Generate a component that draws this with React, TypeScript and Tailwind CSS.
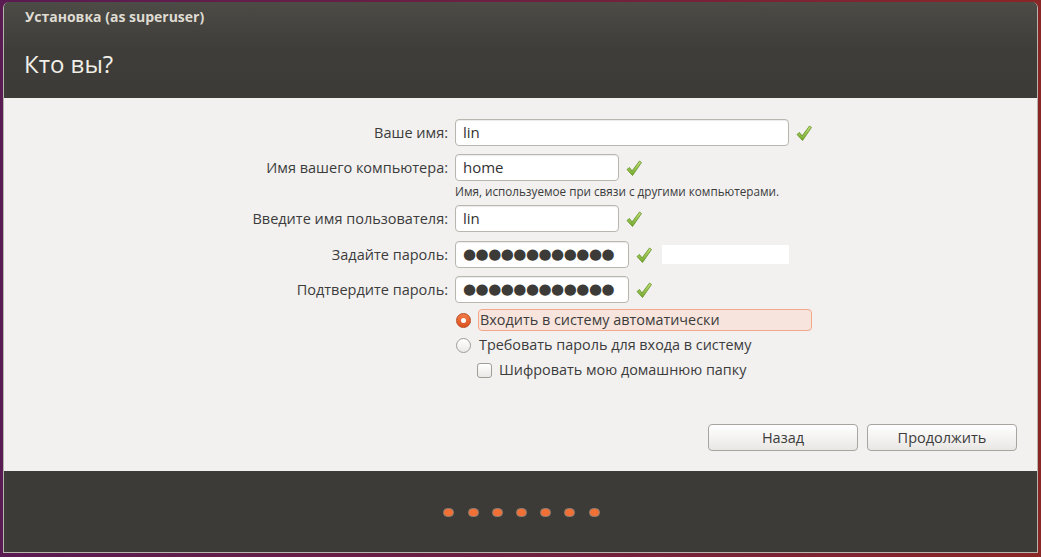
const font = "font-['Open_Sans','DejaVu_Sans',sans-serif]";

function Check() {
  return (
    <svg viewBox="0 0 18 18" className="h-[18px] w-[18px]" aria-hidden>
      <defs>
        <linearGradient id="ck" x1="0" y1="0" x2="0" y2="1">
          <stop offset="0" stopColor="#c4e07a" />
          <stop offset="1" stopColor="#73a82a" />
        </linearGradient>
      </defs>
      <path
        d="M2 10.5 L4.5 8.5 L7 12 L14.5 2 L16.5 3.5 L7.5 16.5 Z"
        fill="url(#ck)"
        stroke="#5d8f1f"
        strokeWidth="0.8"
        strokeLinejoin="round"
      />
    </svg>
  );
}

function Row({
  label,
  value,
  width,
  dots,
  extra,
}: {
  label: string;
  value: string;
  width: string;
  dots?: boolean;
  extra?: React.ReactNode;
}) {
  return (
    <div className="flex h-[27px] items-center">
      <div className="w-[445px] pr-[1px] text-right text-[14.5px] text-[#3c3c3c]">{label}</div>
      <div
        className={`ml-[6px] flex h-[27px] items-center rounded-[4px] border border-[#b9b6b0] bg-white px-[7px] shadow-[inset_0_1px_1px_rgba(0,0,0,0.08)] ${width}`}
      >
        {dots ? (
          <span className="text-[15px] leading-none tracking-[-0.5px] text-[#3c3b37] font-['DejaVu_Sans',sans-serif]">
            ●●●●●●●●●●●●
          </span>
        ) : (
          <span className="text-[15px] text-[#333]">{value}</span>
        )}
      </div>
      <div className="ml-[6px]">
        <Check />
      </div>
      {extra}
    </div>
  );
}

export default function App() {
  return (
    <div
      className={`h-[557px] w-[1041px] overflow-hidden bg-gradient-to-r from-[#5a1a52] via-[#6e2040] to-[#8a2626] pl-[3px] pt-[2px] ${font}`}
    >
      <div className="flex h-[551px] w-[1035px] flex-col overflow-hidden rounded-t-[6px] border-b border-x border-[#b7b4ae] bg-[#3c3b37]">
        {/* header */}
        <div className="h-[96px] bg-gradient-to-b from-[#4c4b46] via-[#3e3d39] to-[#3c3b37]">
          <div className="pl-[21px] pt-[4px] text-[14px] font-bold text-[#dfdbd2]">
            Установка (as superuser)
          </div>
          <div className="pl-[20px] pt-[25px] text-[24px] leading-none text-[#f2efe9]">Кто вы?</div>
        </div>

        {/* content */}
        <div className="flex h-[373px] flex-col bg-[#f2f1f0]">
          <div className="mt-[21px] flex flex-col">
            <Row label="Ваше имя:" value="lin" width="w-[334px]" />
            <div className="mt-[8px]">
              <Row label="Имя вашего компьютера:" value="home" width="w-[164px]" />
            </div>
            <div className="ml-[451px] mt-[3px] text-[11.7px] leading-[15px] text-[#3c3c3c]">
              Имя, используемое при связи с другими компьютерами.
            </div>
            <div className="mt-[6px]">
              <Row label="Введите имя пользователя:" value="lin" width="w-[164px]" />
            </div>
            <div className="mt-[9px]">
              <Row
                label="Задайте пароль:"
                value=""
                dots
                width="w-[174px]"
                extra={<div className="ml-[9px] h-[19px] w-[127px] bg-white" />}
              />
            </div>
            <div className="mt-[8px]">
              <Row label="Подтвердите пароль:" value="" dots width="w-[174px]" />
            </div>

            <div className="ml-[452px] mt-[6px] flex h-[22px] items-center">
              <span className="flex h-[15px] w-[15px] items-center justify-center rounded-full border border-[#b84a1c] bg-gradient-to-b from-[#f27a46] to-[#dd5220]">
                <span className="h-[5px] w-[5px] rounded-full bg-white" />
              </span>
              <div className="ml-[7px] flex h-[22px] w-[334px] items-center rounded-[4px] border border-[#f3a788] bg-[#f7e4dd] px-[1px] text-[14.4px] text-[#3c3c3c]">
                Входить в систему автоматически
              </div>
            </div>
            <div className="ml-[452px] mt-[3px] flex h-[22px] items-center">
              <span className="h-[15px] w-[15px] rounded-full border border-[#a09c96] bg-gradient-to-b from-white to-[#ebe9e6]" />
              <span className="ml-[8px] text-[14.4px] text-[#3c3c3c]">Требовать пароль для входа в систему</span>
            </div>
            <div className="ml-[473px] mt-[3px] flex h-[22px] items-center">
              <span className="h-[15px] w-[15px] rounded-[3px] border border-[#a09c96] bg-gradient-to-b from-white to-[#ebe9e6]" />
              <span className="ml-[7px] text-[14.4px] text-[#3c3c3c]">Шифровать мою домашнюю папку</span>
            </div>
          </div>

          <div className="mt-auto mb-[20px] flex justify-end gap-[9px] pr-[20px]">
            <button className="h-[27px] w-[150px] rounded-[4px] border border-[#a8a5a0] bg-gradient-to-b from-white to-[#e9e7e4] text-[14.5px] text-[#3c3c3c]">
              Назад
            </button>
            <button className="h-[27px] w-[150px] rounded-[4px] border border-[#a8a5a0] bg-gradient-to-b from-white to-[#e9e7e4] text-[14.5px] text-[#3c3c3c]">
              Продолжить
            </button>
          </div>
        </div>

        {/* footer */}
        <div className="flex flex-1 items-start justify-center bg-[#3c3b37] pt-[37px]">
          <div className="ml-[2px] flex gap-[13.2px]">
            {[0, 1, 2, 3, 4, 5, 6].map((i) => (
              <span
                key={i}
                className="h-[9px] w-[11px] rounded-full border border-[#8a7f77] bg-[#f07035]"
              />
            ))}
          </div>
        </div>
      </div>
    </div>
  );
}
